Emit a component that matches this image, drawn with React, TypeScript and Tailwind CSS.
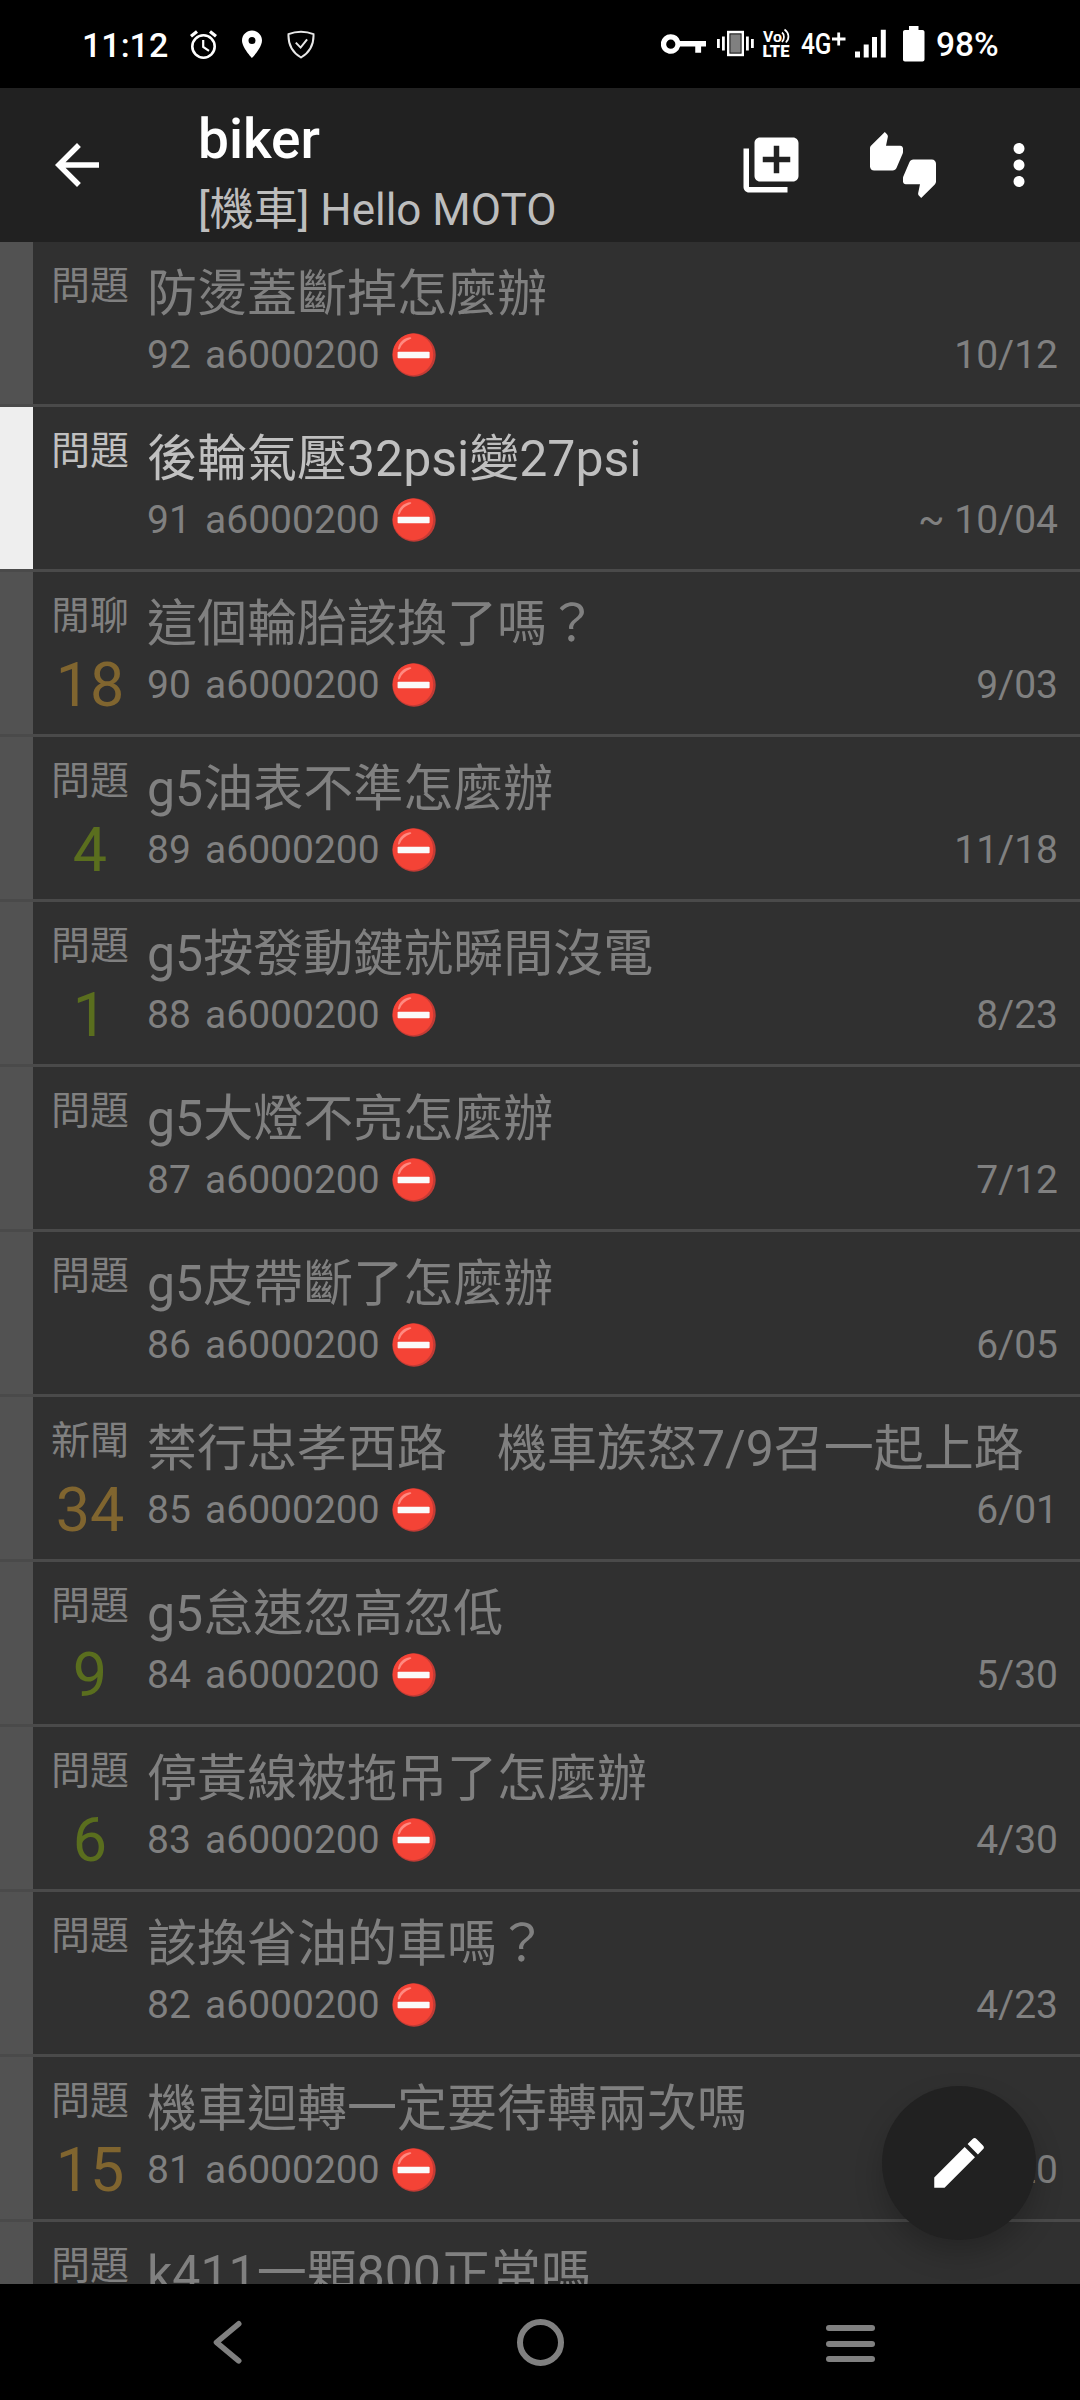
import React from "react";
import { MdArrowBack, MdAddToPhotos, MdThumbsUpDown, MdMoreVert, MdEdit } from "react-icons/md";

type Post = {
  kind: string;
  title: string;
  no: number;
  date: string;
  count?: number;
  unread?: boolean;
};

const posts: Post[] = [
  { kind: "問題", title: "防燙蓋斷掉怎麼辦", no: 92, date: "10/12" },
  { kind: "問題", title: "後輪氣壓32psi變27psi", no: 91, date: "~ 10/04", unread: true },
  { kind: "閒聊", title: "這個輪胎該換了嗎？", no: 90, date: "9/03", count: 18 },
  { kind: "問題", title: "g5油表不準怎麼辦", no: 89, date: "11/18", count: 4 },
  { kind: "問題", title: "g5按發動鍵就瞬間沒電", no: 88, date: "8/23", count: 1 },
  { kind: "問題", title: "g5大燈不亮怎麼辦", no: 87, date: "7/12" },
  { kind: "問題", title: "g5皮帶斷了怎麼辦", no: 86, date: "6/05" },
  { kind: "新聞", title: "禁行忠孝西路　機車族怒7/9召一起上路", no: 85, date: "6/01", count: 34 },
  { kind: "問題", title: "g5怠速忽高忽低", no: 84, date: "5/30", count: 9 },
  { kind: "問題", title: "停黃線被拖吊了怎麼辦", no: 83, date: "4/30", count: 6 },
  { kind: "問題", title: "該換省油的車嗎？", no: 82, date: "4/23" },
  { kind: "問題", title: "機車迴轉一定要待轉兩次嗎", no: 81, date: "4/20", count: 15 },
  { kind: "問題", title: "k411一顆800正常嗎", no: 80, date: "4/18" },
];

function NoEntry() {
  return (
    <svg className="ml-3 h-11 w-11 shrink-0" viewBox="0 0 44 44">
      <circle cx="22" cy="22" r="21.7" fill="#c33b35" />
      <ellipse cx="21" cy="21.4" rx="20.2" ry="20.8" fill="#f44336" />
      <path d="M6 15.5C7 9.5 11.500 5 18 4.200c1.800 0 1.600 1.400.300 1.900C13 8 9.500 11.500 8 15.500c-.6 1.600-2.100 1.500-2 0z" fill="#ff8a80" />
      <rect x="5.600" y="18.800" width="32" height="6.400" rx=".8" fill="#fafafa" />
    </svg>
  );
}

function StatusBar() {
  return (
    <header className="flex h-[88px] shrink-0 items-start bg-black text-white">
      <span className="ml-[82px] mt-[24px] w-[108px] whitespace-nowrap text-[34px] font-medium leading-[42px]">11:12</span>
      <svg className="mt-[30px] h-[30px] w-[28px]" viewBox="0 0 28 30" fill="none" stroke="#fff">
        <circle cx="13.500" cy="16.500" r="11.200" strokeWidth="2.600" />
        <path d="M13.200 10v7l5.800 3.800" strokeWidth="2.200" />
        <path d="M1 6.300 7 1.500M20 1.500l6 4.800" strokeWidth="3.200" />
      </svg>
      <svg className="ml-[24px] mt-[30px] h-[28px] w-[20px]" viewBox="0 0 20 28">
        <path fillRule="evenodd" d="M10 .5C4.500.5 0 4.900 0 10.500 0 17.700 10 28 10 28s10-10.300 10-17.500C20 4.900 15.500.5 10 .5zm0 6.500a3.500 3.500 0 1 1 0 7 3.500 3.500 0 0 1 0-7z" fill="#fff" />
      </svg>
      <svg className="ml-[25px] mt-[30px] h-[29px] w-[28px]" viewBox="0 0 28 29" fill="none" stroke="#e8e8e8" strokeWidth="2">
        <path d="M14 1.700c4 0 8.500.8 12.500 2.500.4 9-2.500 17.300-12.500 23.300C4 21.500 1.100 13.200 1.500 4.200 5.500 2.500 10 1.700 14 1.700z" />
        <path d="m8.800 12.600 4.800 5 6.500-8.200" />
      </svg>
      <svg className="ml-[346px] mt-[33px] h-[22px] w-[45px]" viewBox="0 0 46 22" fill="#fff">
        <path fillRule="evenodd" d="M10 1a10 10 0 0 1 9.500 7H46v5.500h-5V20h-6v-6.500h-15.500A10 10 0 1 1 10 1zm0 5.500a4.700 4.700 0 1 0 0 9.400 4.700 4.700 0 0 0 0-9.400z" />
      </svg>
      <svg className="ml-[11px] mt-[30px] h-[27px] w-[37px]" viewBox="0 0 37 27" fill="#fff">
        <rect x="0" y="9" width="2.800" height="9" />
        <rect x="5" y="6.500" width="2.800" height="14" />
        <rect x="29" y="6.500" width="2.800" height="14" />
        <rect x="34" y="9" width="2.800" height="9" />
        <rect x="11.200" y="2" width="14.600" height="23" fill="#808080" stroke="#fff" strokeWidth="2.400" />
        <rect x="13" y="4" width="11" height="19" fill="none" stroke="#111" strokeWidth=".8" />
      </svg>
      <svg className="ml-[9px] mt-[28px] h-[31px] w-[28px] overflow-visible" viewBox="0 0 28 31" fill="#fff" stroke="none">
        <text x="0" y="14" fontFamily="Roboto, sans-serif" fontWeight="700" fontSize="15" textLength="19" lengthAdjust="spacingAndGlyphs">Vo</text>
        <text x="-.5" y="29.300" fontFamily="Roboto, sans-serif" fontWeight="900" fontSize="17" textLength="27" lengthAdjust="spacingAndGlyphs">LTE</text>
        <path d="M19 4.500c2.600 2 2.600 6.500 0 9.500M21.500 1.500c5 3.500 5 9.500 1.300 13" fill="none" stroke="#fff" strokeWidth="1.700" />
      </svg>
      <svg className="ml-[10px] mt-[28px] h-[31px] w-[48px] overflow-visible" viewBox="0 0 48 31" fill="#fff">
        <text x="0" y="26" fontFamily="Roboto, sans-serif" fontWeight="500" fontSize="29" textLength="30.500" lengthAdjust="spacingAndGlyphs">4G</text>
        <path d="M31 11h13.500M37.700 4.500v13" stroke="#fff" strokeWidth="2.800" />
      </svg>
      <svg className="ml-[6px] mt-[29px] h-[29px] w-[32px]" viewBox="0 0 32 29" fill="#fff">
        <path d="M0 22.500h5V28.500H0zM8.700 15.500h5v13h-5zM17 8h5v20.500h-5zM25.800.8h5v27.700h-5z" />
      </svg>
      <svg className="ml-[16px] mt-[26px] h-[36px] w-[22px]" viewBox="0 0 22 36" fill="#fff">
        <path d="M6 0h9.500v4H19.500c1 0 2 .9 2 2v27.500c0 1.200-.9 2-2 2H2c-1.200 0-2-.8-2-2V6c0-1.100.9-2 2-2h4z" />
      </svg>
      <span className="ml-[11px] mt-[24px] whitespace-nowrap text-[33.5px] font-medium leading-[42px]">98%</span>
    </header>
  );
}

function AppBar() {
  return (
    <div className="flex h-[154px] shrink-0 items-center bg-[#212121] text-white">
      <MdArrowBack className="ml-[44px] size-[66px]" />
      <div className="ml-[88px] flex h-full w-[540px] flex-col whitespace-nowrap">
        <span className="mt-[16px] text-[55px] font-medium leading-[70px]">biker</span>
        <span className="text-[44px] leading-[72px] text-[#bdbdbd]">[機車] Hello MOTO</span>
      </div>
      <MdAddToPhotos className="size-[66px]" />
      <MdThumbsUpDown className="ml-[66px] size-[66px]" />
      <MdMoreVert className="ml-[50px] size-[66px]" />
    </div>
  );
}

function Row({ post }: { post: Post }) {
  const tone = post.unread ? "text-[#c0c0c0]" : "text-[#808080]";
  const countTone = (post.count ?? 0) >= 10 ? "text-[#80652f]" : "text-[#5a6e1e]";
  return (
    <li className="flex h-[165px] shrink-0 border-b-[3px] border-[#4a4a4a]">
      <div className={post.unread ? "w-[33px] bg-[#eeeeee]" : "w-[33px] bg-[#525252]"} />
      <div className="flex w-[114px] flex-col items-center whitespace-nowrap">
        <span className={`mt-[16px] text-[39px] leading-[56px] ${tone}`}>{post.kind}</span>
        <span className={`mt-px text-[61px] leading-[80px] ${countTone}`}>{post.count}</span>
      </div>
      <div className="flex min-w-0 flex-1 flex-col pr-[22px]">
        <span className={`mt-[22px] whitespace-nowrap text-[50px] leading-[60px] ${tone}`}>{post.title}</span>
        <div className="mt-px flex h-[60px] items-center text-[39px] leading-[60px] text-[#808080]">
          <span className="w-[58px]">{post.no}</span>
          <span>a6000200</span>
          <NoEntry />
          <span className="ml-auto">{post.date}</span>
        </div>
      </div>
    </li>
  );
}

function NavBar() {
  return (
    <nav className="flex h-[116px] shrink-0 items-start bg-black text-[#808080]">
      <svg className="ml-[212px] mt-[36px] h-[46px] w-[32px]" viewBox="0 0 32 46" fill="none" stroke="currentColor" strokeWidth="5.600" strokeLinecap="round" strokeLinejoin="round">
        <path d="M26.700 3.800 4.500 22.300 26.700 40.800" />
      </svg>
      <div className="ml-[273px] mt-[35px] size-[47px] rounded-full border-[6px] border-[#808080]" />
      <div className="ml-[262px] mt-[41px] flex w-[49px] flex-col gap-[9.500px]">
        <div className="h-[6px] rounded-full bg-[#808080]" />
        <div className="h-[6px] rounded-full bg-[#808080]" />
        <div className="h-[6px] rounded-full bg-[#808080]" />
      </div>
    </nav>
  );
}

export default function App() {
  return (
    <div className="relative flex h-[2400px] w-[1080px] flex-col overflow-hidden bg-[#303030] font-[Roboto,'Noto_Sans_CJK_TC',sans-serif]">
      <StatusBar />
      <AppBar />
      <ul className="flex min-h-0 flex-1 flex-col overflow-hidden">
        {posts.map((p) => (
          <Row key={p.no} post={p} />
        ))}
      </ul>
      <NavBar />
      <button className="absolute left-[882px] top-[2086px] flex size-[154px] items-center justify-center rounded-full bg-[#212121] text-white shadow-[0_14px_28px_rgba(0,0,0,0.22)]">
        <MdEdit className="size-[66px]" />
      </button>
    </div>
  );
}
